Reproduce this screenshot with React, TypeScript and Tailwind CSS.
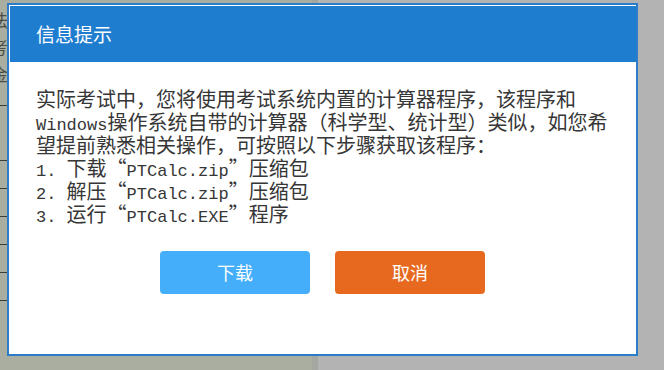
const cjk = { fontFamily: '"Noto Sans CJK SC", "Noto Sans", sans-serif' };

const Latin = ({ children }: { children: string }) => (
  <span className="text-[17px] leading-none font-['Liberation_Mono',monospace]">{children}</span>
);

const Line = ({ children }: { children: React.ReactNode }) => (
  <div className="h-[23px] leading-[23px] whitespace-pre">{children}</div>
);

const App = () => {
  return (
    <div className="relative w-[664px] h-[370px] overflow-hidden" style={cjk}>
      {/* page under the overlay */}
      <div className="flex h-full">
        <div className="w-[312px] bg-[#a9aea1] flex flex-col text-[#4a4d46] text-[17px] leading-[27px]">
          <div className="h-[106px] border-b border-[#3b3d38] pt-[6px] -ml-[9px]">
            <div>法/</div>
            <div>考</div>
            <div>金</div>
          </div>
          <div className="h-[55px] border-b border-[#3b3d38]" />
          <div className="h-[28px] border-b border-[#3b3d38]" />
          <div className="h-[28px] border-b border-[#3b3d38]" />
          <div className="h-[28px] border-b border-[#3b3d38]" />
          <div className="h-[28px] border-b border-[#3b3d38]" />
          <div className="h-[28px] border-b border-[#3b3d38]" />
        </div>
        <div className="w-[6px] bg-[#a4a79f]" />
        <div className="flex-1 bg-[#b3b3b3]" />
      </div>

      {/* dialog */}
      <div className="absolute left-[7px] top-[3px] w-[631px] h-[353px] border-2 border-[#2b7cc9] bg-white flex flex-col">
        <div className="h-[57px] bg-[#1f7dcf] border-t border-l border-white flex items-center pl-[26px] text-white text-[19px]">
          信息提示
        </div>
        <div className="pt-[25px] pl-[27px] text-[20px] text-[#363636]">
          <Line>实际考试中，您将使用考试系统内置的计算器程序，该程序和</Line>
          <Line>
            <Latin>Windows</Latin>操作系统自带的计算器（科学型、统计型）类似，如您希
          </Line>
          <Line>望提前熟悉相关操作，可按照以下步骤获取该程序：</Line>
          <Line>
            <Latin>1. </Latin>下载“<Latin>PTCalc.zip</Latin>”压缩包
          </Line>
          <Line>
            <Latin>2. </Latin>解压“<Latin>PTCalc.zip</Latin>”压缩包
          </Line>
          <Line>
            <Latin>3. </Latin>运行“<Latin>PTCalc.EXE</Latin>”程序
          </Line>
        </div>
        <div className="mt-[26px] flex justify-center gap-[25px]">
          <button className="w-[150px] h-[43px] rounded-[4px] bg-[#45aefa] text-white text-[18px]">
            下载
          </button>
          <button className="w-[150px] h-[43px] rounded-[4px] bg-[#e7691f] text-white text-[18px]">
            取消
          </button>
        </div>
      </div>
    </div>
  );
};

export default App;
